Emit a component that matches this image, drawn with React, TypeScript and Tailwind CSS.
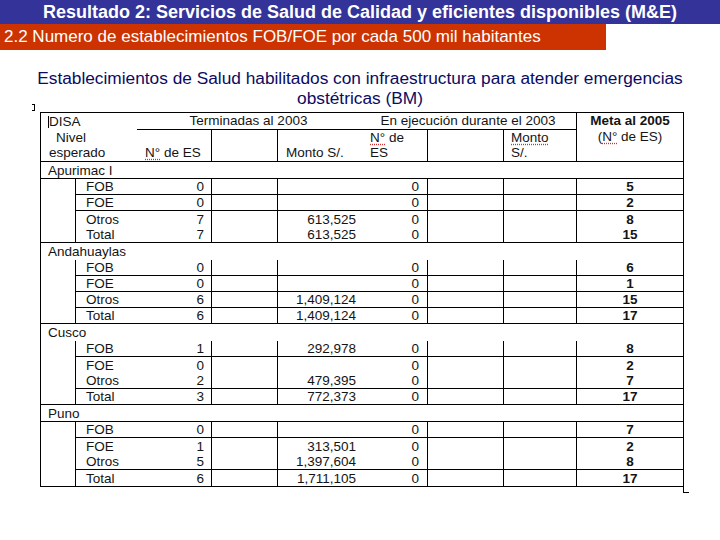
import React from "react";

type Item = [string, string, string, string, string, "p" | "n" | "f" | "last"];
type Section = { name: string; region: "full" | "none"; items: Item[] };

const sections: Section[] = [
  {
    name: "Apurimac I",
    region: "full",
    items: [
      ["FOB", "0", "", "0", "5", "p"],
      ["FOE", "0", "", "0", "2", "p"],
      ["Otros", "7", "613,525", "0", "8", "n"],
      ["Total", "7", "613,525", "0", "15", "f"],
    ],
  },
  {
    name: "Andahuaylas",
    region: "none",
    items: [
      ["FOB", "0", "", "0", "6", "p"],
      ["FOE", "0", "", "0", "1", "p"],
      ["Otros", "6", "1,409,124", "0", "15", "p"],
      ["Total", "6", "1,409,124", "0", "17", "f"],
    ],
  },
  {
    name: "Cusco",
    region: "none",
    items: [
      ["FOB", "1", "292,978", "0", "8", "p"],
      ["FOE", "0", "", "0", "2", "n"],
      ["Otros", "2", "479,395", "0", "7", "p"],
      ["Total", "3", "772,373", "0", "17", "f"],
    ],
  },
  {
    name: "Puno",
    region: "full",
    items: [
      ["FOB", "0", "", "0", "7", "p"],
      ["FOE", "1", "313,501", "0", "2", "n"],
      ["Otros", "5", "1,397,604", "0", "8", "p"],
      ["Total", "6", "1,711,105", "0", "17", "last"],
    ],
  },
];

function Sq({ children }: { children: React.ReactNode }) {
  return (
    <span className="underline decoration-dotted decoration-[#d03030] underline-offset-2">
      {children}
    </span>
  );
}

function DataRow({ item }: { item: Item }) {
  const [label, n, monto, ej, meta, b] = item;
  const full = b === "f" || b === "last";
  const h = b === "last" ? "h-[17px]" : "h-[16px]";
  return (
    <div className={`flex ${h} ${full ? "border-b border-black" : ""}`}>
      <div className="w-[35px] shrink-0 border-r border-black" />
      <div className={`flex flex-1 ${b === "p" ? "border-b border-black" : ""}`}>
        <div className="w-[136px] shrink-0 border-r border-black flex items-center justify-between pl-[10px] pr-[7px]">
          <span>{label}</span>
          <span>{n}</span>
        </div>
        <div className="w-[66px] shrink-0 border-r border-black" />
        <div className="w-[150px] shrink-0 border-r border-black flex items-center">
          <div className="w-[82px] text-right pr-[4px]">{monto}</div>
          <div className="flex-1 text-right pr-[8px]">{ej}</div>
        </div>
        <div className="w-[76px] shrink-0 border-r border-black" />
        <div className="w-[73px] shrink-0 border-r border-black" />
        <div className="flex-1 flex items-center justify-center font-bold">{meta}</div>
      </div>
    </div>
  );
}

export default function App() {
  return (
    <div
      className="relative w-[720px] h-[540px] bg-white overflow-hidden"
      style={{ fontFamily: '"Liberation Sans", Arial, sans-serif' }}
    >
      <div className="h-[24px] bg-[#333399] text-white font-bold text-[18px] leading-[24px] text-center">
        Resultado 2: Servicios de Salud de Calidad y eficientes disponibles (M&amp;E)
      </div>
      <div className="w-[606px] h-[26px] bg-[#cc3300] text-white text-[17px] leading-[26px] pl-[4px]">
        2.2 Numero de establecimientos FOB/FOE por cada 500 mil habitantes
      </div>
      <div className="mt-[18px] text-center text-[17.3px] leading-[20px] text-[#0b0b63]">
        Establecimientos de Salud habilitados con infraestructura para atender emergencias
        <br />
        obstétricas (BM)
      </div>

      <div className="mt-[4px] ml-[40px] w-[644px] border-l border-r border-t border-black text-[13.5px] leading-[15px] text-[#141414]">
        {/* header */}
        <div className="flex border-b border-black">
          <div className="w-[535px] shrink-0">
            <div className="flex h-[17px]">
              <div className="w-[96px] shrink-0 pl-[7px] flex items-center">
                <span className="inline-block w-px h-[12px] bg-black" />
                <span>DISA</span>
              </div>
              <div className="flex flex-1 border-b border-black leading-[16px]">
                <div className="w-[223px] text-center">Terminadas al 2003</div>
                <div className="flex-1 text-center">En ejecución durante el 2003</div>
              </div>
            </div>
            <div className="flex h-[31px]">
              <div className="w-[96px] shrink-0">
                <div className="pl-[15px]">Nivel</div>
                <div className="pl-[8px]">esperado</div>
              </div>
              <div className="w-[75px] shrink-0 border-r border-black pl-[8px] pt-[15px]">
                <Sq>N°</Sq> de ES
              </div>
              <div className="w-[66px] shrink-0 border-r border-black" />
              <div className="w-[150px] shrink-0 border-r border-black flex">
                <div className="w-[82px] pl-[8px] pt-[15px]">Monto S/.</div>
                <div className="flex-1 pl-[10px]">
                  <div>
                    <Sq>N°</Sq> de
                  </div>
                  <div>ES</div>
                </div>
              </div>
              <div className="w-[76px] shrink-0 border-r border-black" />
              <div className="w-[72px] shrink-0 pl-[7px]">
                <div>
                  <Sq>Monto</Sq>
                </div>
                <div>S/.</div>
              </div>
            </div>
          </div>
          <div className="flex-1 border-l border-black text-center leading-[16px]">
            <div className="font-bold">Meta al 2005</div>
            <div>
              (<Sq>N°</Sq> de ES)
            </div>
          </div>
        </div>

        {sections.map((s) => (
          <div key={s.name}>
            <div
              className={`h-[17px] flex items-center pl-[7px] ${
                s.region === "full" ? "border-b border-black" : ""
              }`}
            >
              {s.name}
            </div>
            {s.items.map((it, i) => (
              <DataRow key={i} item={it} />
            ))}
          </div>
        ))}
      </div>

      {/* selection marks */}
      <span className="absolute left-[32px] top-[104px] w-[3px] h-[7px] border-t border-r border-b border-black" />
      <span className="absolute left-[683px] top-[486px] w-[6px] h-[7px] border-l border-b border-black" />
    </div>
  );
}
